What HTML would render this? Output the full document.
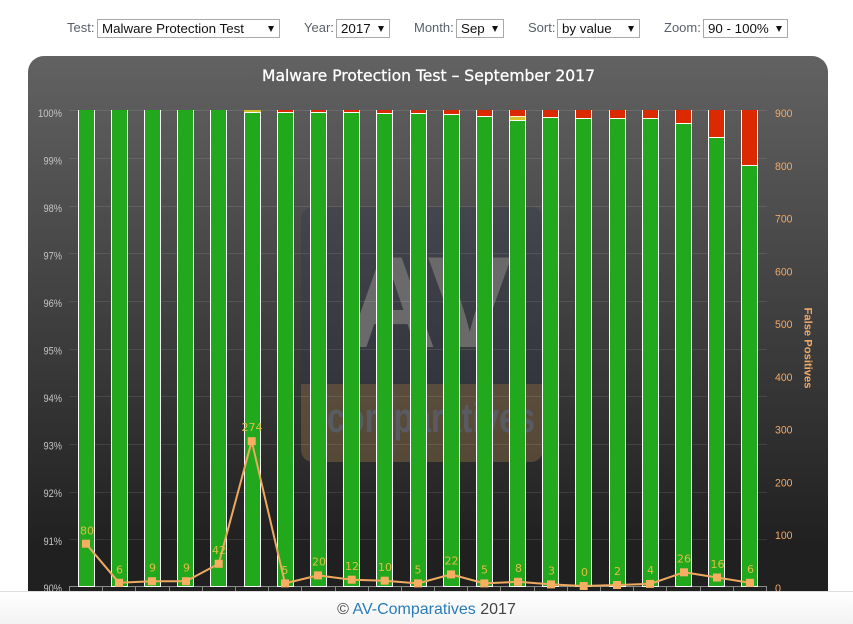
<!DOCTYPE html>
<html>
<head>
<meta charset="utf-8">
<title>Malware Protection Test</title>
<style>
html,body{margin:0;padding:0;background:#fff;width:853px;height:624px;overflow:hidden}
body{position:relative;font-family:"Liberation Sans",Arial,sans-serif}
.l{position:absolute;top:20px;font-size:13px;line-height:16px;color:#59606b;white-space:nowrap}
.s{position:absolute;top:19px;height:17px;border:1px solid #a9a9a9;background:#fff;box-sizing:content-box;font-size:13.33px;line-height:17px;color:#111;white-space:nowrap}
.s span{position:absolute;left:4px;top:0}
.s i{position:absolute;top:6px;width:0;height:0;border-left:3.5px solid transparent;border-right:3.5px solid transparent;border-top:6px solid #111}
#panel{position:absolute;left:28px;top:56px;width:800px;height:540px;border-radius:16px 16px 0 0;background:linear-gradient(#626262,#202020 91%,#202020)}
svg{position:absolute;left:0;top:0}
#foot{position:absolute;left:0;top:591px;width:853px;height:33px;box-sizing:border-box;border-top:1px solid #ddd;background:linear-gradient(#fff,#f3f3f3);text-align:center;font-size:16px;line-height:36px;color:#444}
#foot a{color:#2a7cb8;text-decoration:none}
</style>
</head>
<body>
<div class="l" style="left:67px">Test:</div>
<div class="s" style="left:97px;width:181px"><span>Malware Protection Test</span><i style="left:170px"></i></div>
<div class="l" style="left:304px">Year:</div>
<div class="s" style="left:336px;width:52px"><span>2017</span><i style="left:41px"></i></div>
<div class="l" style="left:414px">Month:</div>
<div class="s" style="left:456px;width:46px"><span>Sep</span><i style="left:35px"></i></div>
<div class="l" style="left:528px">Sort:</div>
<div class="s" style="left:557px;width:81px"><span>by value</span><i style="left:70px"></i></div>
<div class="l" style="left:664px">Zoom:</div>
<div class="s" style="left:703px;width:83px"><span>90 - 100%</span><i style="left:72px"></i></div>

<div id="panel"></div>

<svg width="853" height="624" viewBox="0 0 853 624" xmlns="http://www.w3.org/2000/svg">
<!-- watermark -->
<rect x="301" y="207" width="242" height="255" rx="12" fill="#2f3550" fill-opacity=".3"/>
<path d="M301 384H543V450a12 12 0 0 1-12 12H313a12 12 0 0 1-12-12Z" fill="#a87a3c" fill-opacity=".34"/>
<text x="345" y="347" font-family="Liberation Sans" font-weight="700" font-size="130" fill="#6a6a6a" textLength="167" lengthAdjust="spacingAndGlyphs">AV</text>
<text x="327" y="432" font-family="Liberation Sans" font-weight="700" font-size="42" fill="#585c62" textLength="208" lengthAdjust="spacingAndGlyphs">comparatives</text>

<!-- grid -->
<g stroke="#fff" stroke-opacity=".1" stroke-width="1">
<path d="M69 110.5H767M69 158.5H767M69 206.5H767M69 253.5H767M69 301.5H767M69 349.5H767M69 396.5H767M69 444.5H767M69 492.5H767M69 539.5H767"/>
</g>
<path d="M69 586.5H767M69.5 586V592M102.5 586V592M135.5 586V592M169.5 586V592M202.5 586V592M235.5 586V592M268.5 586V592M301.5 586V592M335.5 586V592M368.5 586V592M401.5 586V592M434.5 586V592M467.5 586V592M500.5 586V592M534.5 586V592M567.5 586V592M600.5 586V592M633.5 586V592M666.5 586V592M700.5 586V592M733.5 586V592M766.5 586V592" stroke="#8a8a8a" stroke-width="1" fill="none"/>

<!-- left axis -->
<g font-family="Liberation Sans,sans-serif" font-size="11" fill="#c4c4c4" text-anchor="end">
<text x="62" y="117" textLength="24" lengthAdjust="spacingAndGlyphs">100%</text>
<text x="62" y="164.5" textLength="18.5" lengthAdjust="spacingAndGlyphs">99%</text>
<text x="62" y="212" textLength="18.5" lengthAdjust="spacingAndGlyphs">98%</text>
<text x="62" y="259.5" textLength="18.5" lengthAdjust="spacingAndGlyphs">97%</text>
<text x="62" y="307" textLength="18.5" lengthAdjust="spacingAndGlyphs">96%</text>
<text x="62" y="354.5" textLength="18.5" lengthAdjust="spacingAndGlyphs">95%</text>
<text x="62" y="402" textLength="18.5" lengthAdjust="spacingAndGlyphs">94%</text>
<text x="62" y="449.5" textLength="18.5" lengthAdjust="spacingAndGlyphs">93%</text>
<text x="62" y="497" textLength="18.5" lengthAdjust="spacingAndGlyphs">92%</text>
<text x="62" y="545" textLength="18.5" lengthAdjust="spacingAndGlyphs">91%</text>
<text x="62" y="592" textLength="18.5" lengthAdjust="spacingAndGlyphs">90%</text>
</g>
<!-- right axis -->
<g font-family="Liberation Sans,sans-serif" font-size="11" fill="#f0aa68">
<text x="775" y="117" textLength="17.5" lengthAdjust="spacingAndGlyphs">900</text>
<text x="775" y="170" textLength="17.5" lengthAdjust="spacingAndGlyphs">800</text>
<text x="775" y="222.5" textLength="17.5" lengthAdjust="spacingAndGlyphs">700</text>
<text x="775" y="275.5" textLength="17.5" lengthAdjust="spacingAndGlyphs">600</text>
<text x="775" y="328" textLength="17.5" lengthAdjust="spacingAndGlyphs">500</text>
<text x="775" y="381" textLength="17.5" lengthAdjust="spacingAndGlyphs">400</text>
<text x="775" y="433.5" textLength="17.5" lengthAdjust="spacingAndGlyphs">300</text>
<text x="775" y="486.5" textLength="17.5" lengthAdjust="spacingAndGlyphs">200</text>
<text x="775" y="539" textLength="17.5" lengthAdjust="spacingAndGlyphs">100</text>
<text x="775" y="592" textLength="6" lengthAdjust="spacingAndGlyphs">0</text>
</g>
<text transform="translate(804.5,348) rotate(90)" text-anchor="middle" font-family="Liberation Sans,sans-serif" font-weight="700" font-size="11" fill="#f0aa68" textLength="81" lengthAdjust="spacingAndGlyphs">False Positives</text>

<!-- title -->
<text x="262" y="81" font-family="DejaVu Sans,sans-serif" font-size="16" fill="#fff" stroke="#fff" stroke-width=".3" textLength="333" lengthAdjust="spacingAndGlyphs">Malware Protection Test – September 2017</text>

<!-- bars: red -->
<g fill="#dc2a00">
<rect x="277" y="110" width="17" height="2"/>
<rect x="310" y="110" width="17" height="2"/>
<rect x="343" y="110" width="17" height="2"/>
<rect x="376" y="110" width="17" height="3"/>
<rect x="410" y="110" width="17" height="3"/>
<rect x="443" y="110" width="17" height="4"/>
<rect x="476" y="110" width="17" height="7"/>
<rect x="509" y="110" width="17" height="6"/>
<rect x="542" y="110" width="17" height="7"/>
<rect x="575" y="110" width="17" height="8"/>
<rect x="609" y="110" width="17" height="8"/>
<rect x="642" y="110" width="17" height="8"/>
<rect x="675" y="110" width="17" height="13"/>
<rect x="708" y="110" width="17" height="27"/>
<rect x="741" y="110" width="17" height="55"/>
</g>
<rect x="244" y="110" width="17" height="2" fill="#d4bd2c"/>
<rect x="509" y="116" width="17" height="4" fill="#d8c22c"/>

<!-- bars: green -->
<g fill="#22a81c" stroke="#fff" stroke-width="1">
<rect x="78.5" y="110.5" width="16" height="476"/>
<rect x="111.5" y="110.5" width="16" height="476"/>
<rect x="144.5" y="110.5" width="16" height="476"/>
<rect x="177.5" y="110.5" width="16" height="476"/>
<rect x="210.5" y="110.5" width="16" height="476"/>
<rect x="244.5" y="112.5" width="16" height="474"/>
<rect x="277.5" y="112.5" width="16" height="474"/>
<rect x="310.5" y="112.5" width="16" height="474"/>
<rect x="343.5" y="112.5" width="16" height="474"/>
<rect x="376.5" y="113.5" width="16" height="473"/>
<rect x="410.5" y="113.5" width="16" height="473"/>
<rect x="443.5" y="114.5" width="16" height="472"/>
<rect x="476.5" y="116.5" width="16" height="470"/>
<rect x="509.5" y="120.5" width="16" height="466"/>
<rect x="542.5" y="117.5" width="16" height="469"/>
<rect x="575.5" y="118.5" width="16" height="468"/>
<rect x="609.5" y="118.5" width="16" height="468"/>
<rect x="642.5" y="118.5" width="16" height="468"/>
<rect x="675.5" y="123.5" width="16" height="463"/>
<rect x="708.5" y="137.5" width="16" height="449"/>
<rect x="741.5" y="165.5" width="16" height="421"/>
</g>
<!-- cover top white edge on full bars -->
<path d="M79 110.5H94M112 110.5H127M145 110.5H160M178 110.5H193M211 110.5H226" stroke="#22a81c" stroke-width="1" fill="none"/>
<!-- red side borders -->
<path d="M277.5 110V112M293.5 110V112M310.5 110V112M326.5 110V112M343.5 110V112M359.5 110V112M376.5 110V113M392.5 110V113M410.5 110V113M426.5 110V113M443.5 110V114M459.5 110V114M476.5 110V116M492.5 110V116M509.5 110V120M525.5 110V120M542.5 110V117M558.5 110V117M575.5 110V118M591.5 110V118M609.5 110V118M625.5 110V118M642.5 110V118M658.5 110V118M675.5 110V123M691.5 110V123M708.5 110V137M724.5 110V137M741.5 110V165M757.5 110V165" stroke="#fff" stroke-width="1" fill="none"/>
<path d="M509 116.5H526" stroke="#fff" stroke-width="1" fill="none" opacity=".8"/>

<!-- line -->
<polyline fill="none" stroke="#eda95f" stroke-width="2" stroke-linejoin="round" points="86,543.7 119,582.8 152,581.2 186,581.2 218.7,563.8 251.7,441.2 285,583.4 318,575.4 351.7,579.7 384.7,580.7 418,583.4 451,574.4 484.3,583.4 518,581.8 551,584.4 583.7,586 617,585 650,583.9 684,572.3 717,577.5 750,582.8"/>
<g fill="#f6ae62">
<rect x="82" y="539.7" width="8" height="8"/>
<rect x="115" y="578.8" width="8" height="8"/>
<rect x="148" y="577.2" width="8" height="8"/>
<rect x="182" y="577.2" width="8" height="8"/>
<rect x="214.7" y="559.8" width="8" height="8"/>
<rect x="247.7" y="437.2" width="8" height="8"/>
<rect x="281" y="579.4" width="8" height="8"/>
<rect x="314" y="571.4" width="8" height="8"/>
<rect x="347.7" y="575.7" width="8" height="8"/>
<rect x="380.7" y="576.7" width="8" height="8"/>
<rect x="414" y="579.4" width="8" height="8"/>
<rect x="447" y="570.4" width="8" height="8"/>
<rect x="480.3" y="579.4" width="8" height="8"/>
<rect x="514" y="577.8" width="8" height="8"/>
<rect x="547" y="580.4" width="8" height="8"/>
<rect x="579.7" y="582" width="8" height="8"/>
<rect x="613" y="581" width="8" height="8"/>
<rect x="646" y="579.9" width="8" height="8"/>
<rect x="680" y="568.3" width="8" height="8"/>
<rect x="713" y="573.5" width="8" height="8"/>
<rect x="746" y="578.8" width="8" height="8"/>
</g>
<!-- data labels -->
<g font-family="DejaVu Sans,sans-serif" font-size="11" fill="#e0bd45" text-anchor="middle">
<text x="87" y="534.5">80</text>
<text x="119.5" y="573.5">6</text>
<text x="152.5" y="571.5">9</text>
<text x="186.5" y="571.5">9</text>
<text x="219" y="554">42</text>
<text x="252" y="431">274</text>
<text x="285" y="574">5</text>
<text x="319" y="565.5">20</text>
<text x="352" y="570">12</text>
<text x="385" y="571">10</text>
<text x="418" y="573.5">5</text>
<text x="451.5" y="564.5">22</text>
<text x="484.5" y="573.5">5</text>
<text x="518.5" y="572">8</text>
<text x="551.5" y="574.5">3</text>
<text x="584.5" y="576">0</text>
<text x="617.5" y="575">2</text>
<text x="650.5" y="574">4</text>
<text x="684" y="562.5">26</text>
<text x="717.5" y="568">16</text>
<text x="750.5" y="573">6</text>
</g>
</svg>

<div id="foot">© <a href="#">AV-Comparatives</a> 2017</div>
</body>
</html>
